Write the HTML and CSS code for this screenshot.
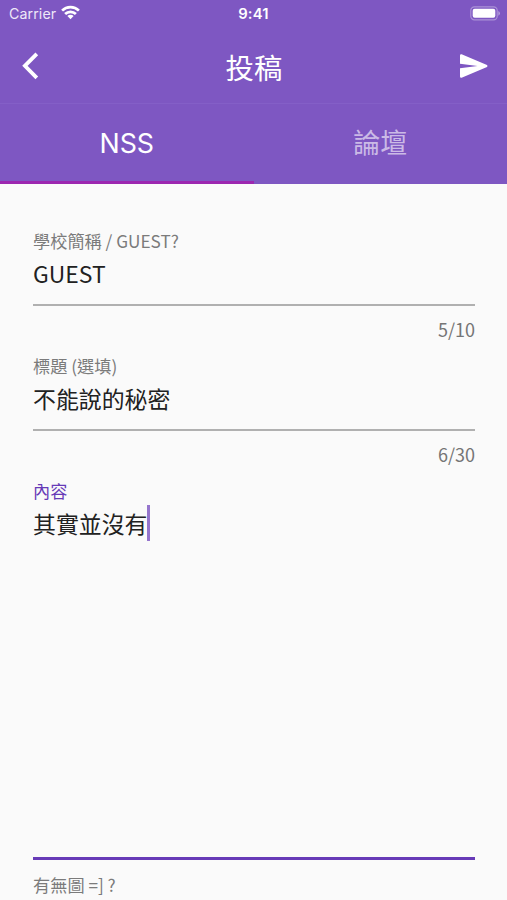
FILE: index.html
```html
<!DOCTYPE html>
<html lang="zh-Hant">
<head>
<meta charset="utf-8">
<meta name="viewport" content="width=device-width, initial-scale=1">
<title>投稿</title>
<link rel="stylesheet" href="styles.css">
</head>
<body>
<header class="header">
  <div class="status">
    <div class="carrier"><span>Carrier</span>
      <svg class="wifi" viewBox="0 0 19 15" width="19" height="15"><g fill="none" stroke="#fff" stroke-width="2.7"><path d="M1.1 5.6a12 12 0 0 1 16.8 0"/><path d="M4.1 9a7.7 7.7 0 0 1 10.8 0"/></g><path fill="#fff" d="M6.4 11.1a4.4 4.4 0 0 1 6.2 0L9.5 14.3z"/></svg>
    </div>
    <span class="clock">9:41</span>
    <svg class="battery" viewBox="0 0 31 15" width="31" height="15"><rect x=".8" y=".8" width="26.4" height="13" rx="3.6" fill="none" stroke="#fff" stroke-opacity=".35" stroke-width="1.2"/><rect x="2.7" y="2.8" width="22.6" height="9" rx="2" fill="#fff"/><path d="M28.4 5a2.6 2.6 0 0 1 0 4.7z" fill="#fff" fill-opacity=".45"/></svg>
  </div>
  <div class="toolbar">
    <svg class="back" viewBox="0 0 18 28" width="18" height="28"><path d="M15.8 1.8 3.9 13.8l11.9 12" fill="none" stroke="#fff" stroke-width="3.8"/></svg>
    <h1 class="title">投稿</h1>
    <svg class="send" viewBox="0 0 28 24" width="28" height="24"><path fill="#fff" d="M1.6.3 27 11 Q28 12 27 13L1.6 23.7Q0 24 0 22.4V14.2L17.5 12 0 9.8V1.6Q0 0 1.6.3z"/></svg>
  </div>
  <nav class="tabs">
    <div class="tab active">NSS</div>
    <div class="tab">論壇</div>
  </nav>
</header>
<main class="form">
  <section class="field">
    <div class="label">學校簡稱 / GUEST?</div>
    <div class="value">GUEST</div>
    <div class="count">5/10</div>
  </section>
  <section class="field">
    <div class="label">標題 (選填)</div>
    <div class="value">不能說的秘密</div>
    <div class="count">6/30</div>
  </section>
  <section class="field focused">
    <div class="label">內容</div>
    <div class="value"><span>其實並沒有</span><i class="caret"></i></div>
  </section>
  <div class="label next">有無圖 =] ?</div>
</main>
</body>
</html>
```

FILE: styles.css
```css
* { box-sizing: border-box; }
body {
  margin: 0;
  height: 900px;
  overflow: hidden;
  background: #fafafa;
  font-family: "Noto Sans CJK TC", sans-serif;
}
svg { display: block; }
.header { height: 184px; background: #7e57c2; color: #fff; }
.status {
  display: grid;
  grid-template-columns: 1fr auto 1fr;
  align-items: center;
  height: 27px;
  padding: 0 6px 0 9px;
  font-family: Inter, sans-serif;
}
.carrier { display: flex; align-items: center; gap: 5px; font-size: 14.2px; color: #eee8f8; letter-spacing: .1px; }
.wifi { margin-top: -2px; }
.clock { margin-left: -3px; font-size: 14.8px; font-weight: 600; letter-spacing: .2px; }
.battery { justify-self: end; }
.toolbar {
  display: flex;
  align-items: center;
  justify-content: space-between;
  height: 77px;
  padding: 2px 19px 0 21px;
  border-bottom: 1px solid #845fc7;
}
.title { margin: 2px 0 0 9px; font-size: 28.4px; line-height: 40px; font-weight: 400; }
.tabs { display: flex; height: 80px; }
.tab {
  flex: 1;
  padding-top: 18px;
  font-size: 27px;
  line-height: 40px;
  text-align: center;
  color: #cbbae6;
  border-bottom: 3px solid transparent;
}
.tab.active { padding-top: 19px; font-family: Inter, sans-serif; font-size: 26.8px; color: #fff; border-color: #9c27b0; }
.form { padding: 44px 32px 0 33px; }
.field { height: 125px; }
.label { font-size: 17.2px; line-height: 26px; color: #7b7b7b; }
.value {
  display: flex;
  align-items: center;
  height: 52px;
  padding-bottom: 12px;
  font-size: 22.9px;
  line-height: 38px;
  color: #212121;
  border-bottom: 2px solid #b0b0b0;
}
.count { padding-top: 9px; font-size: 18px; line-height: 28px; text-align: right; color: #757575; }
.focused { height: 382px; }
.focused .label { color: #673ab7; }
.focused .value { height: 356px; align-items: flex-start; border-bottom: 3px solid #673ab7; }
.caret { width: 3px; height: 36px; margin-top: 1px; background: #9575cd; }
.next { padding-top: 12px; }
```
